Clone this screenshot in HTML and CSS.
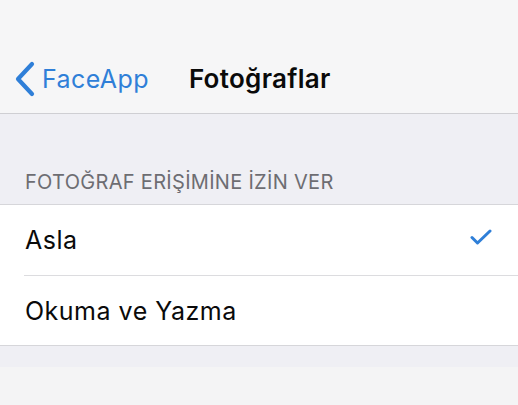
FILE: index.html
```html
<!DOCTYPE html>
<html lang="tr">
<head>
  <meta charset="UTF-8">
  <meta name="viewport" content="width=device-width, initial-scale=1.0">
  <title>Fotoğraflar</title>
  <link rel="stylesheet" href="styles.css">
</head>
<body>
  <div class="navbar">
    <a class="back" href="#">
      <svg class="chevron" width="22" height="36" viewBox="0 0 22 36">
        <path d="M18 3 L4 18 L18 33" fill="none" stroke="#2f7fd8" stroke-width="4.2" stroke-linecap="round" stroke-linejoin="round"/>
      </svg>
      <span>FaceApp</span>
    </a>
    <h1>Fotoğraflar</h1>
  </div>

  <div class="section-header">FOTOĞRAF ERİŞİMİNE İZİN VER</div>

  <ul class="list">
    <li class="row">
      <span>Asla</span>
      <svg class="check" width="22" height="16" viewBox="0 0 22 16">
        <path d="M2 8.5 L7.5 14 L20 2" fill="none" stroke="#2f7fd8" stroke-width="3" stroke-linecap="round" stroke-linejoin="round"/>
      </svg>
    </li>
    <li class="row">
      <span>Okuma ve Yazma</span>
    </li>
  </ul>

  <div class="footer-gap"></div>
</body>
</html>
```

FILE: styles.css
```css
body {
  margin: 0;
  font-family: Inter, "Liberation Sans", Arial, sans-serif;
  background-color: #f4f4f5;
  color: #0a0a0a;
}
.navbar {
  height: 114px;
  box-sizing: border-box;
  padding: 61px 0 0 14px;
  display: flex;
  align-items: flex-start;
  background: #f6f6f7;
  border-bottom: 1px solid #cfcfd3;
}
.back {
  display: flex;
  align-items: center;
  gap: 6px;
  color: #2f7fd8;
  text-decoration: none;
  font-size: 25px;
  letter-spacing: 0.4px;
  line-height: 36px;
}
.navbar h1 {
  margin: 0 0 0 40px;
  font-size: 26px;
  letter-spacing: 0.3px;
  line-height: 36px;
  font-weight: 600;
  color: #0a0a0a;
}
.section-header {
  background: #efeff4;
  height: 91px;
  box-sizing: border-box;
  padding: 56px 0 0 25px;
  font-size: 20px;
  letter-spacing: 0.3px;
  line-height: 24px;
  color: #6d6d72;
  border-bottom: 1px solid #d6d6da;
}
.list {
  list-style: none;
  margin: 0;
  padding: 0 0 0 24px;
  background: #ffffff;
  border-bottom: 1px solid #d6d6da;
}
.row {
  height: 70px;
  display: flex;
  align-items: center;
  justify-content: space-between;
  padding: 0 26px 0 1px;
  font-size: 25px;
  letter-spacing: 0.5px;
}
.row + .row {
  height: 69px;
  border-top: 1px solid #dcdcdf;
}
.check {
  margin-top: -6px;
}
.footer-gap {
  height: 21px;
  background: #efeff4;
}
```
